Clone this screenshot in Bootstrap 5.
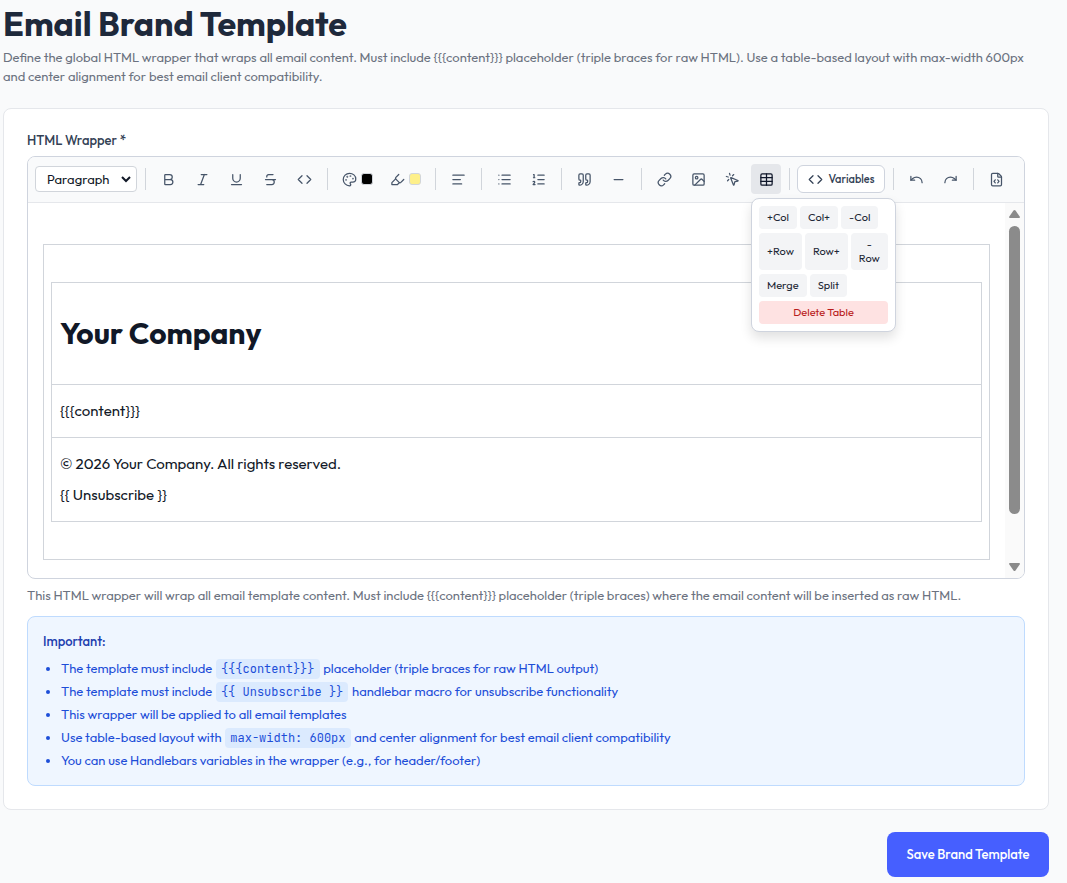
<!DOCTYPE html>
<html lang="en">
<head>
<meta charset="utf-8">
<meta name="viewport" content="width=device-width, initial-scale=1">
<title>Email Brand Template</title>
<link href="https://cdn.jsdelivr.net/npm/bootstrap@5.3.0/dist/css/bootstrap.min.css" rel="stylesheet">
<style>
  body { background: #f9fafb; color: #1e293b; font-family: Outfit, Lato, "Liberation Sans", sans-serif; font-size: 13px; line-height: 19px; }
  .page { padding: 4px 18px 6px 3px; }
  h1.page-title { font-size: 34px; line-height: 40px; font-weight: 700; color: #1e293b; }
  .intro, .hint { color: #6b7280; }
  .intro { padding-right: 8px; }
  .hint { padding-top: 7px; }
  .panel { border: 1px solid #e5e7eb; border-radius: 8px; padding: 22px 23px 23px; margin-top: 22px; }
  .field-label { font-weight: 500; color: #334155; margin-bottom: 6px; }
  .editor { border: 1px solid #cfd4de; border-radius: 8px; }
  .toolbar { background: #f9fafb; border-bottom: 1px solid #e5e7eb; border-radius: 7px 7px 0 0; padding: 7px 7px 8px; gap: 4px; }
  .toolbar .vr { width: 1px; height: 22px; background: #d1d5db; opacity: 1; margin: 0 3px 0 4px; flex: none; align-self: center; }
  .tool { border: 0; background: none; color: #475569; width: 30px; height: 30px; border-radius: 4px; padding: 0; flex: none; gap: 4px; }
  .tool svg, .vars svg { width: 15px; height: 15px; fill: none; stroke: currentColor; stroke-width: 2; stroke-linecap: round; stroke-linejoin: round; flex: none; }
  .tool-color { width: 44px; }
  .tool.on { background: #e5e7eb; color: #0f172a; }
  .swatch { width: 12px; height: 12px; border: 1px solid #d1d5db; border-radius: 3px; }
  .block-type { width: 102px; height: 26px; font-size: 13px; line-height: 18px; padding: 0 20px 0 11px; border: 1px solid #d1d5db; border-radius: 4px; color: #111827;
    background-image: url("data:image/svg+xml,%3Csvg xmlns='http://www.w3.org/2000/svg' viewBox='0 0 12 12'%3E%3Cpath d='M2 4l4 4 4-4' fill='none' stroke='%23111827' stroke-width='2'/%3E%3C/svg%3E");
    background-size: 12px 12px; background-position: right 4px center; }
  .vars { width: 88px; height: 28px; border: 1px solid #cfd4de; border-radius: 6px; background: #fff; color: #334155; font-size: 11px; font-weight: 500; padding: 0; gap: 6px; flex: none; }
  .table-menu { position: absolute; top: 34px; left: 0; z-index: 5; width: 145px; background: #fff; border: 1px solid #cfd4de; border-radius: 8px; padding: 7px; box-shadow: 0 6px 12px rgba(0,0,0,.12); }
  .table-menu div { gap: 3px; }
  .table-menu div + div, .table-menu .drop { margin-top: 4px; }
  .table-menu button { border: 0; border-radius: 4px; background: #f3f4f6; color: #1f2937; font-size: 11px; line-height: 14px; padding: 4px 8px 5px; }
  .table-menu .drop { background: #fee2e2; color: #b91c1c; }
  .canvas { padding: 41px 15px 18px; color: #111827; font-size: 15px; line-height: 24px; }
  .mail, .mail-body { width: 100%; border-collapse: collapse; }
  .mail td { border: 1px solid #d1d5db; padding: 14px 8px; }
  .mail td.shell { padding: 37px 7px; }
  .mail h2 { font-size: 30px; font-weight: 700; line-height: 40px; margin: 16px 0 17px; }
  .mail p + p { margin-top: 7px; }
  .track { width: 19px; background: #fafafa; padding: 6px 0; border-radius: 0 0 7px 0; flex: none; }
  .track svg { width: 11px; height: 10px; fill: #8b8b8b; }
  .thumb { width: 11px; height: 288px; border-radius: 6px; background: #8b8b8b; margin-top: 7px; }
  .notice { background: #eff6ff; border: 1px solid #bfdbfe; border-radius: 8px; padding: 15px; margin-top: 11px; color: #1d4ed8; }
  .notice-title { color: #1e40af; font-weight: 500; margin-bottom: 7px; }
  .notice ul { padding-left: 18px; }
  .notice li { line-height: 20px; }
  .notice li + li { margin-top: 3px; }
  .notice code { background: #dbeafe; color: #1d4ed8; border-radius: 4px; padding: 2px 5px; margin: 0 1px; font-family: "JetBrains Mono", "Liberation Mono", monospace; font-size: 12px; line-height: 1; }
  .save { background: #465fff; color: #fff; border: 0; border-radius: 8px; width: 162px; height: 45px; font-weight: 500; margin-top: 22px; }
</style>
</head>
<body>
<main class="page">
  <h1 class="page-title mb-1">Email Brand Template</h1>
  <p class="intro mb-0">Define the global HTML wrapper that wraps all email content. Must include {{{content}}} placeholder (triple braces for raw HTML). Use a table-based layout with max-width 600px and center alignment for best email client compatibility.</p>

  <section class="panel bg-white">
    <label class="field-label d-block" for="block">HTML Wrapper *</label>
    <div class="editor bg-white">
      <div class="toolbar d-flex align-items-center">
        <select id="block" class="form-select block-type flex-shrink-0"><option>Paragraph</option></select>
        <span class="vr"></span>
        <button class="tool d-flex align-items-center justify-content-center" aria-label="Bold"><svg viewBox="0 0 24 24"><path d="M6 12h9a4 4 0 0 1 0 8H7a1 1 0 0 1-1-1V5a1 1 0 0 1 1-1h7a4 4 0 0 1 0 8"/></svg></button>
        <button class="tool d-flex align-items-center justify-content-center" aria-label="Italic"><svg viewBox="0 0 24 24"><path d="M19 4h-9M14 20H5M15 4 9 20"/></svg></button>
        <button class="tool d-flex align-items-center justify-content-center" aria-label="Underline"><svg viewBox="0 0 24 24"><path d="M6 4v6a6 6 0 0 0 12 0V4M4 20h16"/></svg></button>
        <button class="tool d-flex align-items-center justify-content-center" aria-label="Strikethrough"><svg viewBox="0 0 24 24"><path d="M16 4H9a3 3 0 0 0-2.83 4M14 12a4 4 0 0 1 0 8H6M4 12h16"/></svg></button>
        <button class="tool d-flex align-items-center justify-content-center" aria-label="Code"><svg viewBox="0 0 24 24"><path d="m16 18 6-6-6-6M8 6l-6 6 6 6"/></svg></button>
        <span class="vr"></span>
        <button class="tool tool-color d-flex align-items-center justify-content-center" aria-label="Text color"><svg viewBox="0 0 24 24"><path d="M12 22a1 1 0 0 1 0-20 10 9 0 0 1 10 9 5 5 0 0 1-5 5h-2.250a1.750 1.750 0 0 0-1.400 2.800l.3.4a1.750 1.750 0 0 1-1.400 2.800z"/><circle cx="13.500" cy="6.500" r=".5"/><circle cx="17.500" cy="10.500" r=".5"/><circle cx="6.500" cy="12.500" r=".5"/><circle cx="8.500" cy="7.500" r=".5"/></svg><span class="swatch bg-black"></span></button>
        <button class="tool tool-color d-flex align-items-center justify-content-center" aria-label="Highlight"><svg viewBox="0 0 24 24"><path d="m9 11-6 6v3h9l3-3"/><path d="m22 12-4.600 4.600a2 2 0 0 1-2.800 0l-5.200-5.200a2 2 0 0 1 0-2.800L14 4"/></svg><span class="swatch" style="background:#fef08a"></span></button>
        <span class="vr"></span>
        <button class="tool d-flex align-items-center justify-content-center" aria-label="Align left"><svg viewBox="0 0 24 24"><path d="M21 5H3M15 12H3M17 19H3"/></svg></button>
        <span class="vr"></span>
        <button class="tool d-flex align-items-center justify-content-center" aria-label="Bulleted list"><svg viewBox="0 0 24 24"><path d="M3 5h.01M3 12h.01M3 19h.01M8 5h13M8 12h13M8 19h13"/></svg></button>
        <button class="tool d-flex align-items-center justify-content-center" aria-label="Numbered list"><svg viewBox="0 0 24 24"><path d="M11 5h10M11 12h10M11 19h10M4 4h1v5M4 9h2M6.500 20H3.400c0-1 2.600-1.925 2.600-3.500a1.500 1.500 0 0 0-2.600-1.020"/></svg></button>
        <span class="vr"></span>
        <button class="tool d-flex align-items-center justify-content-center" aria-label="Quote"><svg viewBox="0 0 24 24"><path d="M16 3a2 2 0 0 0-2 2v6a2 2 0 0 0 2 2 1 1 0 0 1 1 1v1a2 2 0 0 1-2 2 1 1 0 0 0-1 1v2a1 1 0 0 0 1 1 6 6 0 0 0 6-6V5a2 2 0 0 0-2-2zM5 3a2 2 0 0 0-2 2v6a2 2 0 0 0 2 2 1 1 0 0 1 1 1v1a2 2 0 0 1-2 2 1 1 0 0 0-1 1v2a1 1 0 0 0 1 1 6 6 0 0 0 6-6V5a2 2 0 0 0-2-2z"/></svg></button>
        <button class="tool d-flex align-items-center justify-content-center" aria-label="Horizontal rule"><svg viewBox="0 0 24 24"><path d="M5 12h14"/></svg></button>
        <span class="vr"></span>
        <button class="tool d-flex align-items-center justify-content-center" aria-label="Link"><svg viewBox="0 0 24 24"><path d="M10 13a5 5 0 0 0 7.540.54l3-3a5 5 0 0 0-7.070-7.070l-1.720 1.710"/><path d="M14 11a5 5 0 0 0-7.540-.54l-3 3a5 5 0 0 0 7.070 7.070l1.710-1.710"/></svg></button>
        <button class="tool d-flex align-items-center justify-content-center" aria-label="Image"><svg viewBox="0 0 24 24"><rect x="3" y="3" width="18" height="18" rx="2"/><circle cx="9" cy="9" r="2"/><path d="m21 15-3.086-3.086a2 2 0 0 0-2.828 0L6 21"/></svg></button>
        <button class="tool d-flex align-items-center justify-content-center" aria-label="Button"><svg viewBox="0 0 24 24"><path d="M14 4.100 12 6M5.100 8l-2.900-.8M6 12l-1.900 2M7.200 2.200 8 5.100"/><path d="M9.037 9.690a.498.498 0 0 1 .653-.653l11 4.500a.5.5 0 0 1-.074.949l-4.349 1.041a1 1 0 0 0-.740.739l-1.040 4.350a.5.5 0 0 1-.950.074z"/></svg></button>
        <div class="position-relative">
          <button class="tool on d-flex align-items-center justify-content-center" aria-label="Table" aria-expanded="true"><svg viewBox="0 0 24 24"><rect x="3" y="3" width="18" height="18" rx="2"/><path d="M12 3v18M3 9h18M3 15h18"/></svg></button>
          <div class="table-menu">
            <div class="d-flex"><button>+Col</button><button>Col+</button><button>-Col</button></div>
            <div class="d-flex"><button>+Row</button><button>Row+</button><button>-<br>Row</button></div>
            <div class="d-flex"><button>Merge</button><button>Split</button></div>
            <button class="drop w-100 d-block">Delete Table</button>
          </div>
        </div>
        <span class="vr"></span>
        <button class="vars d-flex align-items-center justify-content-center"><svg viewBox="0 0 24 24"><path d="m16 18 6-6-6-6M8 6l-6 6 6 6"/></svg>Variables</button>
        <span class="vr"></span>
        <button class="tool d-flex align-items-center justify-content-center" aria-label="Undo"><svg viewBox="0 0 24 24"><path d="M3 7v6h6"/><path d="M21 17a9 9 0 0 0-9-9 9 9 0 0 0-6 2.300L3 13"/></svg></button>
        <button class="tool d-flex align-items-center justify-content-center" aria-label="Redo"><svg viewBox="0 0 24 24"><path d="M21 7v6h-6"/><path d="M3 17a9 9 0 0 1 9-9 9 9 0 0 1 6 2.300L21 13"/></svg></button>
        <span class="vr"></span>
        <button class="tool d-flex align-items-center justify-content-center" aria-label="Source"><svg viewBox="0 0 24 24"><path d="M6 22a2 2 0 0 1-2-2V4a2 2 0 0 1 2-2h8a2.400 2.400 0 0 1 1.700.7l3.600 3.600a2.400 2.400 0 0 1 .7 1.700v12a2 2 0 0 1-2 2z"/><path d="M14 2v5a1 1 0 0 0 1 1h5M10 12.500 8 15l2 2.500M14 12.500l2 2.500-2 2.500"/></svg></button>
      </div>
      <div class="d-flex">
        <div class="canvas flex-grow-1">
          <table class="mail"><tr><td class="shell">
            <table class="mail-body">
              <tr><td><h2>Your Company</h2></td></tr>
              <tr><td><p class="mb-0">{{{content}}}</p></td></tr>
              <tr><td><p class="mb-0">© 2026 Your Company. All rights reserved.</p><p class="mb-0">{{ Unsubscribe }}</p></td></tr>
            </table>
          </td></tr></table>
        </div>
        <div class="track d-flex flex-column align-items-center">
          <svg viewBox="0 0 11 10"><path d="M4.500 1.500q1-1 2 0L11 8q0 1-1 1H1Q0 9 0 8z"/></svg>
          <div class="thumb"></div>
          <svg class="mt-auto" viewBox="0 0 11 10"><path d="M4.500 8.500q1 1 2 0L11 2q0-1-1-1H1Q0 1 0 2z"/></svg>
        </div>
      </div>
    </div>
    <p class="hint mb-0">This HTML wrapper will wrap all email template content. Must include {{{content}}} placeholder (triple braces) where the email content will be inserted as raw HTML.</p>
    <div class="notice">
      <p class="notice-title">Important:</p>
      <ul class="mb-0">
        <li>The template must include <code>{{{content}}}</code> placeholder (triple braces for raw HTML output)</li>
        <li>The template must include <code>{{ Unsubscribe }}</code> handlebar macro for unsubscribe functionality</li>
        <li>This wrapper will be applied to all email templates</li>
        <li>Use table-based layout with <code>max-width: 600px</code> and center alignment for best email client compatibility</li>
        <li>You can use Handlebars variables in the wrapper (e.g., for header/footer)</li>
      </ul>
    </div>
  </section>
  <div class="d-flex justify-content-end"><button class="save">Save Brand Template</button></div>
</main>
<script src="https://cdn.jsdelivr.net/npm/bootstrap@5.3.0/dist/js/bootstrap.bundle.min.js"></script>
</body>
</html>
